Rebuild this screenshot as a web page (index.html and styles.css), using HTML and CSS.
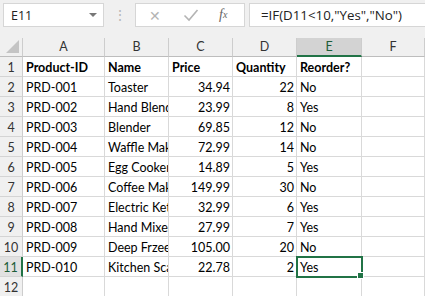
FILE: index.html
```html
<!DOCTYPE html>
<html lang="en">
<head>
  <meta charset="UTF-8" />
  <title>Book1 - Excel</title>
  <link rel="stylesheet" href="styles.css">
</head>
<body>
  <div class="toolbar">
    <div class="name-box">
      <span>E11</span>
      <span class="caret"></span>
    </div>
    <div class="grip">⋮</div>
    <div class="fx-box">
      <span class="fx-cancel">✕</span>
      <svg class="fx-ok" width="16" height="14" viewBox="0 0 16 14">
        <path d="M1.5 7.5 L6 12 L14.5 2" fill="none" stroke="#b4b4b4" stroke-width="1.6"/>
      </svg>
      <span class="fx-label">f<sub>x</sub></span>
    </div>
    <div class="formula">=IF(D11&lt;10,"Yes","No")</div>
  </div>

  <div class="sheet" id="sheet">
    <div class="corner"><span class="tri"></span></div>
    <div class="col-head">A</div>
    <div class="col-head">B</div>
    <div class="col-head">C</div>
    <div class="col-head">D</div>
    <div class="col-head active">E</div>
    <div class="col-head">F</div>
  </div>

  <script>
    const sheet = document.getElementById('sheet');

    const rows = [
      ['Product-ID', 'Name', 'Price', 'Quantity', 'Reorder?'],
      ['PRD-001', 'Toaster', '34.94', '22', 'No'],
      ['PRD-002', 'Hand Blender', '23.99', '8', 'Yes'],
      ['PRD-003', 'Blender', '69.85', '12', 'No'],
      ['PRD-004', 'Waffle Maker', '72.99', '14', 'No'],
      ['PRD-005', 'Egg Cooker', '14.89', '5', 'Yes'],
      ['PRD-006', 'Coffee Maker', '149.99', '30', 'No'],
      ['PRD-007', 'Electric Kettle', '32.99', '6', 'Yes'],
      ['PRD-008', 'Hand Mixer', '27.99', '7', 'Yes'],
      ['PRD-009', 'Deep Frzeezer', '105.00', '20', 'No'],
      ['PRD-010', 'Kitchen Scale', '22.78', '2', 'Yes'],
      ['', '', '', '', '']
    ];

    rows.forEach((row, i) => {
      const n = i + 1;
      let html = `<div class="row-head${n === 11 ? ' active' : ''}">${n}</div>`;
      row.forEach((val, c) => {
        let cls = 'cell';
        if (n === 1) cls += ' bold';
        else if (c === 2 || c === 3) cls += ' num';
        if (n === 11 && c === 4) cls += ' selected';
        html += `<div class="${cls}">${val}</div>`;
      });
      html += '<div class="cell"></div>';
      sheet.insertAdjacentHTML('beforeend', html);
    });
  </script>
</body>
</html>
```

FILE: styles.css
```css
body {
  margin: 0;
  width: 425px;
  height: 296px;
  overflow: hidden;
  background: #fff;
  font-family: Lato, "Liberation Sans", sans-serif;
}

.toolbar {
  height: 38px;
  background: #f0f0f0;
  display: flex;
  align-items: flex-start;
  padding: 3px 0 0 3px;
  box-sizing: border-box;
  font-family: "Open Sans", "Liberation Sans", sans-serif;
  color: #222;
}

.name-box {
  width: 101px;
  height: 24px;
  box-sizing: border-box;
  background: #fff;
  border: 1px solid #d6d6d6;
  display: flex;
  align-items: center;
  justify-content: space-between;
  padding: 0 6px 0 7px;
  font-size: 12.5px;
}

.caret {
  width: 0;
  height: 0;
  border-left: 4px solid transparent;
  border-right: 4px solid transparent;
  border-top: 4px solid #777;
}

.grip {
  width: 31px;
  text-align: center;
  color: #b8b8b8;
  font-size: 14px;
  line-height: 24px;
}

.fx-box {
  width: 110px;
  height: 24px;
  box-sizing: border-box;
  background: #fff;
  border: 1px solid #d6d6d6;
  display: flex;
  align-items: center;
  padding-left: 13px;
}

.fx-cancel {
  color: #b4b4b4;
  font-size: 14px;
  width: 34px;
}

.fx-ok {
  margin-right: 20px;
}

.fx-label {
  font-family: "Liberation Serif", serif;
  font-style: italic;
  font-size: 14px;
  color: #666;
}

.fx-label sub {
  font-size: 10px;
  vertical-align: 1px;
}

.formula {
  flex: 1;
  height: 24px;
  margin-left: 4px;
  box-sizing: border-box;
  background: #fff;
  border: 1px solid #d6d6d6;
  border-right: none;
  padding-left: 11px;
  font-size: 13.3px;
  line-height: 22px;
}

.sheet {
  display: grid;
  grid-template-columns: 23px 82px 64px 64px 64px 65px 1fr;
  grid-template-rows: 19px;
  grid-auto-rows: 20px;
  font-size: 12.5px;
  color: #000;
}

.corner,
.col-head,
.row-head {
  background: #f0f0f0;
  box-sizing: border-box;
  border-right: 1px solid #cdcdcd;
  border-bottom: 1px solid #bdbdbd;
  color: #333;
}

.corner {
  position: relative;
}

.corner .tri {
  position: absolute;
  right: 3px;
  bottom: 3px;
  width: 0;
  height: 0;
  border-left: 13px solid transparent;
  border-bottom: 13px solid #c4c4c4;
}

.col-head {
  text-align: center;
  line-height: 18px;
}

.col-head.active {
  background: #d3d3d3;
  border-bottom: 2px solid #217346;
  color: #1d5d38;
}

.row-head {
  text-align: center;
  line-height: 15px;
  padding-top: 3px;
  border-bottom-color: #d4d4d4;
}

.row-head.active {
  background: #e1e1e1;
  border-right: 2px solid #217346;
  color: #1d5d38;
}

.cell {
  box-sizing: border-box;
  border-right: 1px solid #d9d9d9;
  border-bottom: 1px solid #d9d9d9;
  padding: 3px 3px 0;
  line-height: 15px;
  white-space: nowrap;
  overflow: hidden;
}

.cell.bold {
  font-weight: bold;
}

.cell.num {
  text-align: right;
  padding-right: 2px;
}

.cell.selected {
  position: relative;
  overflow: visible;
  outline: 2px solid #217346;
  outline-offset: -1px;
}

.cell.selected::after {
  content: "";
  position: absolute;
  right: -3px;
  bottom: -3px;
  width: 5px;
  height: 5px;
  background: #217346;
  border: 1px solid #fff;
}
```
